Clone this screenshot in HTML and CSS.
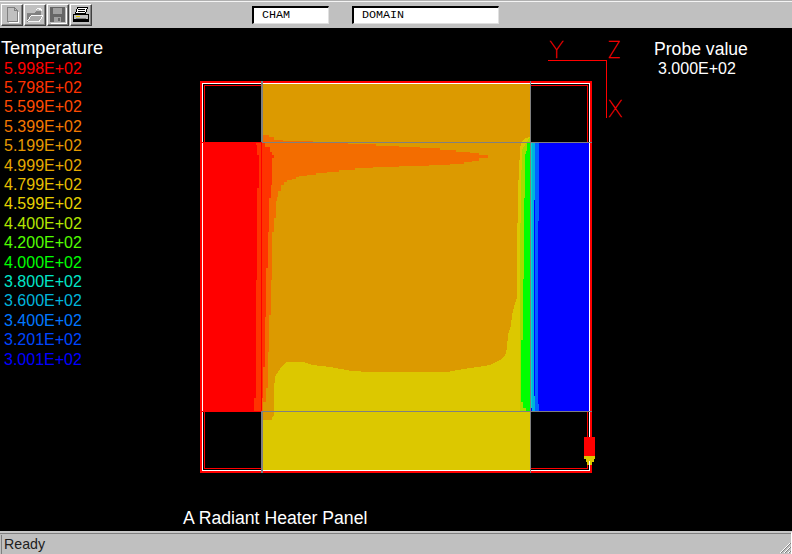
FILE: index.html
```html
<!DOCTYPE html>
<html lang="en">
<head>
<meta charset="utf-8">
<title>Temperature</title>
<link rel="stylesheet" href="styles.css">
</head>
<body>
<div class="app">
  <header class="toolbar">
    <div class="tools">
      <button class="tool"><svg class="icon" viewBox="0 0 18 18"><path d="M4.500 1.500H11.500L14.500 4.500V15.500H4.500Z" fill="none" stroke="#808080"/><path d="M11.500 1.500V4.500H14.500" fill="none" stroke="#808080"/><path d="M5.500 16.500H15.500V5.500" fill="none" stroke="#fff"/></svg></button>
      <button class="tool"><svg class="icon" viewBox="0 0 20 18"><path d="M1.500 7.500H9.500L11 5.500H16.500V8.500L13.500 16.500H1.500Z" fill="#808080" stroke="#808080"/><path d="M2 15L6 9H19L15 16H2Z" fill="#a8a8a8" stroke="#fff"/><path d="M11 3.500Q14 0 17 2.500M17 2.500V5M17 2.500H14.500" fill="none" stroke="#fff"/></svg></button>
      <button class="tool"><svg class="icon" viewBox="0 0 18 18"><path d="M1 1H16V16H1Z" fill="#666"/><path d="M4 2H13V8H4Z" fill="#a0a0a0"/><path d="M5 11H12V16H5Z" fill="#a0a0a0"/><path d="M9 12H11V15H9Z" fill="#666"/><path d="M2 17H17V2" fill="none" stroke="#fff"/></svg></button>
      <button class="tool"><svg class="icon" viewBox="0 0 18 18"><path d="M5.500 1.500H15.500L13.500 7.500H3.500Z" fill="#fff" stroke="#000"/><path d="M6 3.500H13M5.500 5.500H12.500" stroke="#000"/><path d="M1.500 8.500H16.500V13.500H1.500Z" fill="#c0c0c0" stroke="#000"/><path d="M4 10H8V11H4Z" fill="#dcc800"/><path d="M1.500 13.500H16.500V15.500H1.500Z" fill="#000" stroke="#000"/><path d="M4 12H14" stroke="#808080"/></svg></button>
    </div>
    <div class="field field-cham">CHAM</div>
    <div class="field field-domain">DOMAIN</div>
  </header>

  <main class="canvas">
    <svg class="plot" viewBox="0 28 792 503" shape-rendering="crispEdges">
      <rect x="203" y="143" width="59" height="268" fill="#ff0000"/>
      <rect x="530" y="143" width="60" height="268" fill="#0000ff"/>
      <rect x="262" y="83" width="268" height="388" fill="#dcc800"/>
      <polygon fill="#dc9a00" points="262,83 530,83 530,137 525,138 521,143 520,150 518,190 517,258 517,297 514,307 512,315 511,325 508,335 507,348 505,356 500,360 494,363 490,365 484,366 464,369 447,372 370,372 352,371 330,367 313,365 303,362 286,362 282,366 278,372 275,377 274,390 274,415 272,417 272,420 263,420 262,420"/>
      <polygon fill="#f36d00" points="262,135 269,135 269,137 274,137 274,140 283,140 283,141 313,141 313,143 348,143 348,144 376,144 376,146 399,146 399,147 420,147 420,148 440,148 440,150 456,150 456,152 470,152 470,153 479,153 479,155 488,155 488,158 479,158 479,161 472,161 472,162 464,162 464,164 450,164 450,165 429,165 429,166 399,166 399,167 373,167 373,168 355,168 355,170 339,170 339,172 327,172 327,173 316,173 316,175 307,175 307,176 299,176 299,177 296,177 296,179 292,179 292,180 287,180 287,182 284,182 284,185 281,185 281,191 278,191 278,197 277,197 277,201 276,201 276,218 274,218 274,232 272,232 272,280 271,280 271,315 269,315 269,352 268,352 268,388 266,388 266,402 263,402 263,411 262,411"/>
      <polygon fill="#ff3300" points="261,143 265,143 265,147 270,147 270,152 272,152 272,155 274,155 274,158 272,158 272,185 271,185 271,198 269,198 269,232 268,232 268,268 266,268 266,317 265,317 265,367 263,367 263,398 262,398 262,411 254,411 254,398 256,398 256,280 257,280 257,188 259,188 259,155 257,155 257,145 256,145 256,143"/>
      <polygon fill="#dcc800" points="530,137 525,138 521,143 520,150 518,190 517,258 517,297 514,307 512,315 511,325 508,335 507,348 505,356 505,411 530,411"/>
      <polygon fill="#a4dc00" points="530,137 526,143 522,150 521,190 520,258 520,411 530,411"/>
      <polygon fill="#00ff00" points="530,143 527,143 527,150 525,155 525,190 524,206 524,258 523,300 523,340 521,340 521,402 523,402 523,408 526,408 526,411 530,411"/>
      <polygon fill="#00dcc8" points="530,143 534,143 534,175 533,175 533,395 534,402 530,411"/>
      <polygon fill="#00b4dc" points="532,143 536,143 536,150 535,150 535,200 534,200 534,395 536,400 537,405 537,411 532,411"/>
      <polygon fill="#0064ff" points="535,143 539,143 539,221 538,221 538,404 539,404 539,411 535,411"/>
      <g fill="#ff0000">
        <rect x="200" y="81" width="392" height="2"/>
        <rect x="200" y="471" width="392" height="2"/>
        <rect x="200" y="81" width="2" height="392"/>
        <rect x="590" y="81" width="2" height="392"/>
      </g>
      <g fill="#ffffff">
        <rect x="202" y="83" width="388" height="1"/>
        <rect x="202" y="470" width="388" height="1"/>
        <rect x="202" y="83" width="1" height="388"/>
        <rect x="589" y="83" width="1" height="388"/>
      </g>
      <g fill="#ff0000">
        <rect x="204" y="85" width="58" height="1"/>
        <rect x="204" y="85" width="1" height="57"/>
        <rect x="204" y="468" width="58" height="1"/>
        <rect x="204" y="411" width="1" height="58"/>
        <rect x="530" y="85" width="58" height="1"/>
        <rect x="587" y="85" width="1" height="57"/>
        <rect x="530" y="468" width="58" height="1"/>
        <rect x="587" y="411" width="1" height="58"/>
        <rect x="261" y="142" width="1" height="269"/>
        <rect x="200" y="142" width="62" height="1"/>
        <rect x="200" y="411" width="62" height="1"/>
      </g>
      <g fill="#808080">
        <rect x="262" y="142" width="330" height="1"/>
        <rect x="262" y="411" width="330" height="1"/>
        <rect x="261" y="81" width="2" height="61"/>
        <rect x="261" y="411" width="2" height="62"/>
        <rect x="530" y="81" width="1" height="392"/>
      </g>
      <rect x="584" y="437" width="11" height="19" fill="#ff0000"/>
      <polygon fill="#dcc800" points="584,456 595,456 595,459 594,459 594,462 592,462 592,465 590,465 590,468 589,468 589,465 587,465 587,462 586,462 586,459 584,459"/>
      <rect x="589" y="461" width="1" height="9" fill="#ffffff"/>
      <rect x="548" y="60" width="59" height="1" fill="#ff0000"/>
      <rect x="606" y="60" width="1" height="58" fill="#ff0000"/>
      <text class="axis" x="549" y="58">Y</text>
      <text class="axis" x="607" y="58">Z</text>
      <text class="axis" x="608" y="117">X</text>
    </svg>

    <section class="legend">
      <h2 class="heading">Temperature</h2>
      <ul class="levels">
        <li class="level l1">5.998E+02</li>
        <li class="level l2">5.798E+02</li>
        <li class="level l3">5.599E+02</li>
        <li class="level l4">5.399E+02</li>
        <li class="level l5">5.199E+02</li>
        <li class="level l6">4.999E+02</li>
        <li class="level l7">4.799E+02</li>
        <li class="level l8">4.599E+02</li>
        <li class="level l9">4.400E+02</li>
        <li class="level l10">4.200E+02</li>
        <li class="level l11">4.000E+02</li>
        <li class="level l12">3.800E+02</li>
        <li class="level l13">3.600E+02</li>
        <li class="level l14">3.400E+02</li>
        <li class="level l15">3.201E+02</li>
        <li class="level l16">3.001E+02</li>
      </ul>
    </section>

    <section class="probe">
      <h2 class="heading">Probe value</h2>
      <p class="probe-value">3.000E+02</p>
    </section>

    <p class="caption">A Radiant Heater Panel</p>
  </main>

  <footer class="status">
    <span class="status-text">Ready</span>
    <svg class="grip" viewBox="0 0 12 12" shape-rendering="crispEdges"><path d="M11 1L1 11M11 5L5 11M11 9L9 11" stroke="#fff" fill="none"/><path d="M12 1L2 11M12 5L6 11M12 9L10 11" stroke="#808080" fill="none"/></svg>
  </footer>
</div>
</body>
</html>
```
FILE: styles.css
```css
* { box-sizing: border-box; }
html, body { margin: 0; padding: 0; height: 100%; background: #000; }
body { font-family: "Liberation Sans", Arial, sans-serif; overflow: hidden; }

.app { display: flex; flex-direction: column; width: 792px; height: 554px; }

.toolbar {
  height: 28px;
  background: #c0c0c0;
  border-top: 1px solid #b0b0b0;
  box-shadow: inset 0 1px 0 #f4f4f4;
  display: flex;
  align-items: flex-start;
  padding: 3px 0 0 1px;
}
.tools { display: flex; gap: 1px; width: 251px; }
.tool {
  width: 22px;
  height: 22px;
  padding: 0;
  background: #c0c0c0;
  border: 1px solid;
  border-color: #fff #404040 #404040 #fff;
  box-shadow: inset -1px -1px 0 #808080;
  display: flex;
  align-items: center;
  justify-content: center;
}
.icon { width: 18px; height: 18px; display: block; shape-rendering: crispEdges; }

.field {
  height: 18px;
  margin-top: 2px;
  background: #fff;
  border: 1px solid;
  border-color: #000 #e0e0e0 #e0e0e0 #000;
  border-width: 2px 1px 1px 2px;
  font-family: "Liberation Mono", "Courier New", monospace;
  font-size: 11.7px;
  line-height: 15px;
  color: #000;
  padding-left: 8px;
}
.field-cham { width: 77px; margin-right: 23px; }
.field-domain { width: 147px; }

.canvas {
  position: relative;
  flex: 1;
  background: #000;
  color: #fff;
  display: grid;
  grid-template-columns: 183px 471px 1fr;
  grid-template-rows: auto 1fr auto;
  padding-top: 11px;
  padding-bottom: 3px;
}
.plot { position: absolute; left: 0; top: 0; width: 792px; height: 503px; }
.axis { font-family: Inter, "Liberation Sans", sans-serif; font-weight: 100; font-size: 23px; fill: #ff0000; stroke: #ff0000; stroke-width: 0.4px; }

.legend { grid-column: 1 / 3; grid-row: 1; position: relative; }
.heading { margin: 0; font-size: 17.6px; font-weight: 400; line-height: 20px; color: #fff; }
.legend .heading { font-size: 18.2px; line-height: 19.6px; padding-left: 1px; }
.levels { list-style: none; margin: 0; padding: 0 0 0 4px; }
.level { font-size: 16px; line-height: 19.4px; }
.l1 { color: #ff0000; }
.l2 { color: #ff3300; }
.l3 { color: #ff4c00; }
.l4 { color: #f47800; }
.l5 { color: #e69a00; }
.l6 { color: #e6aa00; }
.l7 { color: #e6be00; }
.l8 { color: #e6d200; }
.l9 { color: #b4e600; }
.l10 { color: #50ff00; }
.l11 { color: #00ff00; }
.l12 { color: #00e6c8; }
.l13 { color: #00b4dc; }
.l14 { color: #0078ff; }
.l15 { color: #0046ff; }
.l16 { color: #0000ff; }

.probe { grid-column: 3; grid-row: 1; position: relative; }
.probe-value { margin: 0; padding-left: 4px; font-size: 16px; line-height: 19.4px; }

.caption { grid-column: 2; grid-row: 3; margin: 0; position: relative; font-size: 17.65px; line-height: 20px; color: #fff; }

.status {
  height: 23px;
  background: #c0c0c0;
  border-top: 2px solid #c8c8c8;
  box-shadow: inset 0 1px 0 #808080;
  display: flex;
  align-items: flex-end;
  justify-content: space-between;
  color: #202020;
  border-right: 1px solid #fff;
}
.status-text { font-size: 14.2px; line-height: 19px; margin-left: 1px; padding-left: 2px; border-left: 1px solid #808080; }
.grip { width: 12px; height: 12px; display: block; }
```
